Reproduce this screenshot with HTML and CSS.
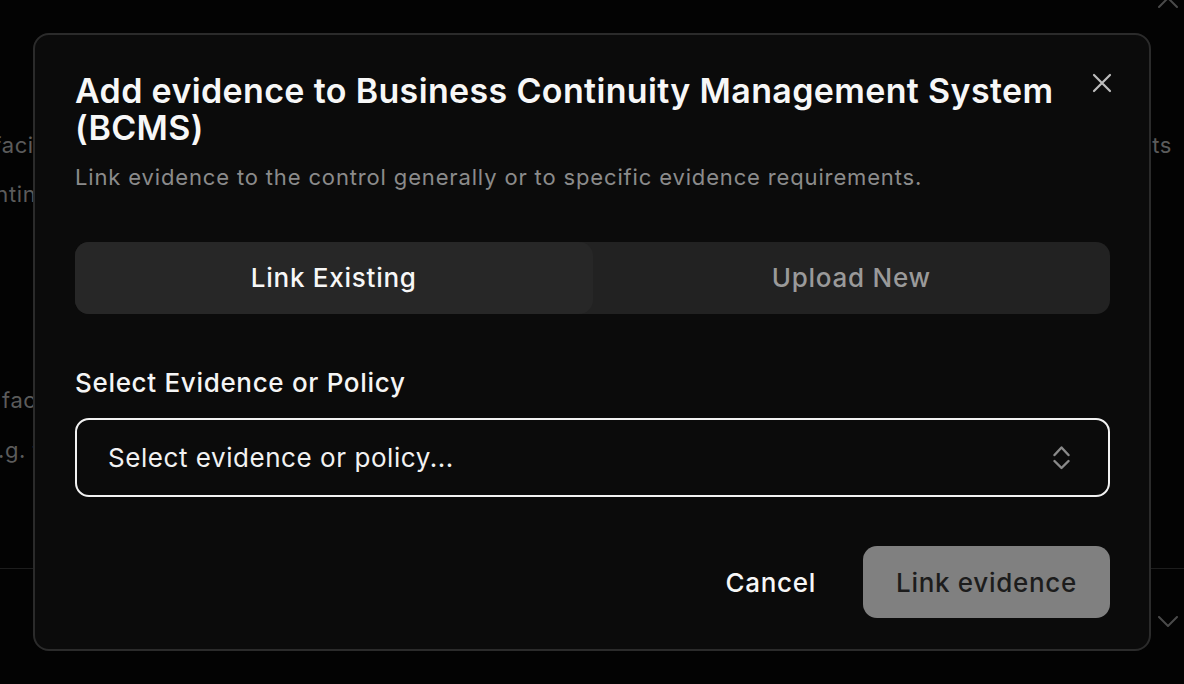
FILE: index.html
```html
<!DOCTYPE html>
<html lang="en">
<head>
<meta charset="utf-8">
<title>Add evidence</title>
<link rel="stylesheet" href="styles.css">
</head>
<body>
<div class="page">
  <aside class="side side-left">
    <div class="bg-line l1"><span class="cut cut-a">and supporting facilities</span></div>
    <div class="bg-line l2"><span class="cut cut-b">operational continuity</span></div>
    <div class="bg-line l3"><span class="cut cut-c">environmental factors</span></div>
    <div class="bg-line l4"><span class="cut cut-d">(e.g. floods)</span></div>
    <div class="bg-divider"></div>
  </aside>

  <div class="dialog" role="dialog" aria-labelledby="dlg-title">
    <header class="dialog-header">
      <div class="dialog-heading">
        <h2 id="dlg-title" class="dialog-title">Add evidence to Business Continuity Management System (BCMS)</h2>
        <p class="dialog-desc">Link evidence to the control generally or to specific evidence requirements.</p>
      </div>
      <button class="close-btn" aria-label="Close">
        <svg width="20" height="20" viewBox="0 0 20 20" fill="none" stroke="currentColor" stroke-width="2.2" stroke-linecap="round"><path d="M2 2 18 18M18 2 2 18"/></svg>
      </button>
    </header>

    <div class="tabs">
      <button class="tab tab-active">Link Existing</button>
      <button class="tab">Upload New</button>
    </div>

    <label class="field-label">Select Evidence or Policy</label>
    <div class="select">
      <span class="select-value">Select evidence or policy...</span>
      <svg class="select-icon" width="17" height="25" viewBox="0 0 17 25" fill="none" stroke="currentColor" stroke-width="2.4" stroke-linecap="round" stroke-linejoin="round"><path d="M1.5 10 8.5 2.5 15.5 10"/><path d="M1.5 16 8.5 23 15.5 16"/></svg>
    </div>

    <footer class="dialog-footer">
      <button class="btn btn-ghost">Cancel</button>
      <button class="btn btn-primary">Link evidence</button>
    </footer>
  </div>

  <aside class="side side-right">
    <svg class="bg-chev bg-chev-up" width="20" height="12" viewBox="0 0 20 12" fill="none" stroke="currentColor" stroke-width="2" stroke-linecap="round" stroke-linejoin="round"><path d="M1 10 10 1 19 10"/></svg>
    <div class="bg-line r1"><span class="cut cut-r">requirements</span></div>
    <div class="bg-divider r-divider"></div>
    <svg class="bg-chev bg-chev-down" width="20" height="12" viewBox="0 0 20 12" fill="none" stroke="currentColor" stroke-width="2" stroke-linecap="round" stroke-linejoin="round"><path d="M1 1 10 10 19 1"/></svg>
  </aside>
</div>
</body>
</html>
```

FILE: styles.css
```css
* { box-sizing: border-box; }

html, body {
  margin: 0;
  padding: 0;
  background: #030303;
  font-family: Inter, "Noto Sans", "DejaVu Sans", sans-serif;
  -webkit-font-smoothing: antialiased;
}

button {
  font-family: inherit;
  border: none;
  background: none;
  cursor: pointer;
  padding: 0;
}

.page {
  width: 1184px;
  height: 684px;
  overflow: hidden;
  display: grid;
  grid-template-columns: 33px 1118px 33px;
  align-items: start;
}

/* ---------- dimmed page behind the dialog ---------- */
.side {
  height: 684px;
  overflow: hidden;
  display: flex;
  flex-direction: column;
}

.bg-line {
  height: 30px;
  line-height: 30px;
  font-size: 22px;
  letter-spacing: 0.6px;
  color: #5b5b5b;
  display: flex;
  justify-content: flex-end;
  white-space: nowrap;
}

.l1 { margin-top: 130px; }
.l2 { margin-top: 19px; }
.l3 { margin-top: 176px; }
.l4 { margin-top: 20px; }

.cut-a { margin-right: -52px; }
.cut-b { margin-right: -44px; }
.cut-c { margin-right: -46px; }
.cut-d { margin-right: -77px; }

.bg-divider {
  margin-top: 103px;
  height: 1px;
  background: #1d1d1d;
}

.side-right .bg-line {
  justify-content: flex-end;
  padding-right: 12px;
}

.bg-chev {
  color: #4a4a4a;
  flex: none;
  margin-left: 7px;
}
.bg-chev-up { margin-top: -3px; }
.r1 { margin-top: 121px; }
.r-divider { margin-top: 408px; }
.bg-chev-down { margin-top: 47px; }

/* ---------- dialog ---------- */
.dialog {
  margin-top: 33px;
  width: 1118px;
  height: 618px;
  background: #0b0b0b;
  border: 2px solid #2b2b2b;
  border-radius: 16px;
  padding: 37px 39px 31px 40px;
  display: flex;
  flex-direction: column;
}

.dialog-header {
  display: flex;
  align-items: flex-start;
  gap: 20px;
}

.dialog-heading { flex: 1; min-width: 0; }

.dialog-title {
  margin: 0;
  font-size: 34px;
  line-height: 37px;
  font-weight: 600;
  color: #f7f7f7;
  letter-spacing: 0.35px;
}

.dialog-desc {
  margin: 16px 0 0;
  font-size: 22px;
  line-height: 30px;
  color: #8b8b8b;
  letter-spacing: 0.85px;
}

.close-btn {
  color: #bdbdbd;
  width: 20px;
  height: 20px;
  margin-top: 1px;
  margin-right: -2px;
  display: flex;
}

.tabs {
  margin-top: 50px;
  height: 72px;
  display: grid;
  grid-template-columns: 1fr 1fr;
  background: #222222;
  border-radius: 14px;
  flex: none;
}

.tab {
  height: 72px;
  line-height: 72px;
  font-size: 26px;
  font-weight: 500;
  letter-spacing: 0.75px;
  color: #9a9a9a;
  border-radius: 14px;
}

.tab-active {
  background: #272727;
  color: #f7f7f7;
}

.field-label {
  margin-top: 53px;
  font-size: 26px;
  line-height: 32px;
  font-weight: 500;
  letter-spacing: 0.68px;
  color: #f5f5f5;
}

.select {
  margin-top: 19px;
  height: 79px;
  border: 2px solid #f2f2f2;
  border-radius: 14px;
  padding: 0 38px 0 31px;
  display: flex;
  align-items: center;
  justify-content: space-between;
  flex: none;
}

.select-value {
  font-size: 26px;
  letter-spacing: 0.55px;
  color: #f2f2f2;
}

.select-icon { color: #8a8a8a; }

.dialog-footer {
  margin-top: auto;
  display: flex;
  justify-content: flex-end;
  gap: 14px;
}

.btn {
  height: 72px;
  padding: 0 33px;
  border-radius: 14px;
  font-size: 26px;
  font-weight: 500;
  letter-spacing: 0.7px;
}

.btn-ghost { color: #f7f7f7; }

.btn-primary {
  background: #808080;
  color: #1c1c1c;
}
```
